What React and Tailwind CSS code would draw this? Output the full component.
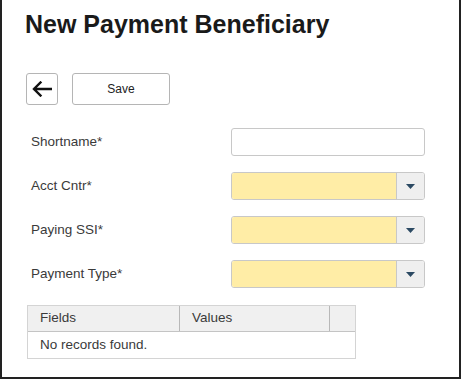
import { useState } from 'react';

const FONT = { fontFamily: '"Liberation Sans", Arial, sans-serif' };

const ArrowLeft = () => (
  <svg width="20" height="16" viewBox="0 0 20 16" fill="none">
    <path d="M19 8H2.5M8.5 1.5L2 8l6.5 6.5" stroke="#111" strokeWidth="2.4" strokeLinecap="square" />
  </svg>
);

const Caret = () => (
  <svg width="9" height="5" viewBox="0 0 9 5">
    <path d="M0 0h9L4.5 5z" fill="#2c4a63" />
  </svg>
);

const FormRow = ({ label, children }) => (
  <div className="flex items-center h-[28px]">
    <label className="w-[229px] pl-[29px] text-[13.5px] text-[#3a3a3a]">{label}</label>
    {children}
  </div>
);

const SelectBox = () => (
  <div className="flex h-[28px] w-[194px] rounded-[3px] border border-[#c8c8c8] overflow-hidden">
    <div className="flex-1 bg-[#ffeda6]" />
    <div className="w-[28px] flex items-center justify-center bg-[#efefef] border-l border-[#c8c8c8]">
      <Caret />
    </div>
  </div>
);

export default function App() {
  const [shortname, setShortname] = useState('');

  return (
    <div style={FONT} className="w-[462px] h-[381px] bg-white">
      <div className="w-[461px] h-[379px] border-l-2 border-r-2 border-b-2 border-[#222] flex flex-col">
        <h1 className="pl-[23px] pt-[9px] text-[25px] leading-[30px] font-bold text-[#1a1a1a]">
          New Payment Beneficiary
        </h1>

        <div className="flex gap-[14px] pl-[24px] mt-[34px]">
          <button className="w-[32px] h-[32px] flex items-center justify-center rounded-[3px] border border-[#b5b5b5] bg-white">
            <ArrowLeft />
          </button>
          <button className="w-[98px] h-[32px] rounded-[3px] border border-[#b5b5b5] bg-white text-[12px] text-[#222]">
            Save
          </button>
        </div>

        <div className="flex flex-col gap-[16px] mt-[23px]">
          <FormRow label="Shortname*">
            <input
              value={shortname}
              onChange={(e) => setShortname(e.target.value)}
              className="h-[28px] w-[194px] rounded-[3px] border border-[#c8c8c8] bg-white px-2 text-[13px] outline-none"
            />
          </FormRow>
          <FormRow label="Acct Cntr*">
            <SelectBox />
          </FormRow>
          <FormRow label="Paying SSI*">
            <SelectBox />
          </FormRow>
          <FormRow label="Payment Type*">
            <SelectBox />
          </FormRow>
        </div>

        <div className="ml-[25px] mt-[17px] w-[329px] border border-[#d4d4d4] text-[13.5px] text-[#3a3a3a]">
          <div className="flex h-[26px] bg-[#f0f0f0] border-b border-[#c4c4c4]">
            <div className="w-[152px] pl-[12px] flex items-center border-r border-[#b8b8b8]">Fields</div>
            <div className="w-[150px] pl-[12px] flex items-center border-r border-[#b8b8b8]">Values</div>
            <div className="flex-1" />
          </div>
          <div className="h-[26px] pl-[12px] flex items-center">No records found.</div>
        </div>
      </div>
    </div>
  );
}
